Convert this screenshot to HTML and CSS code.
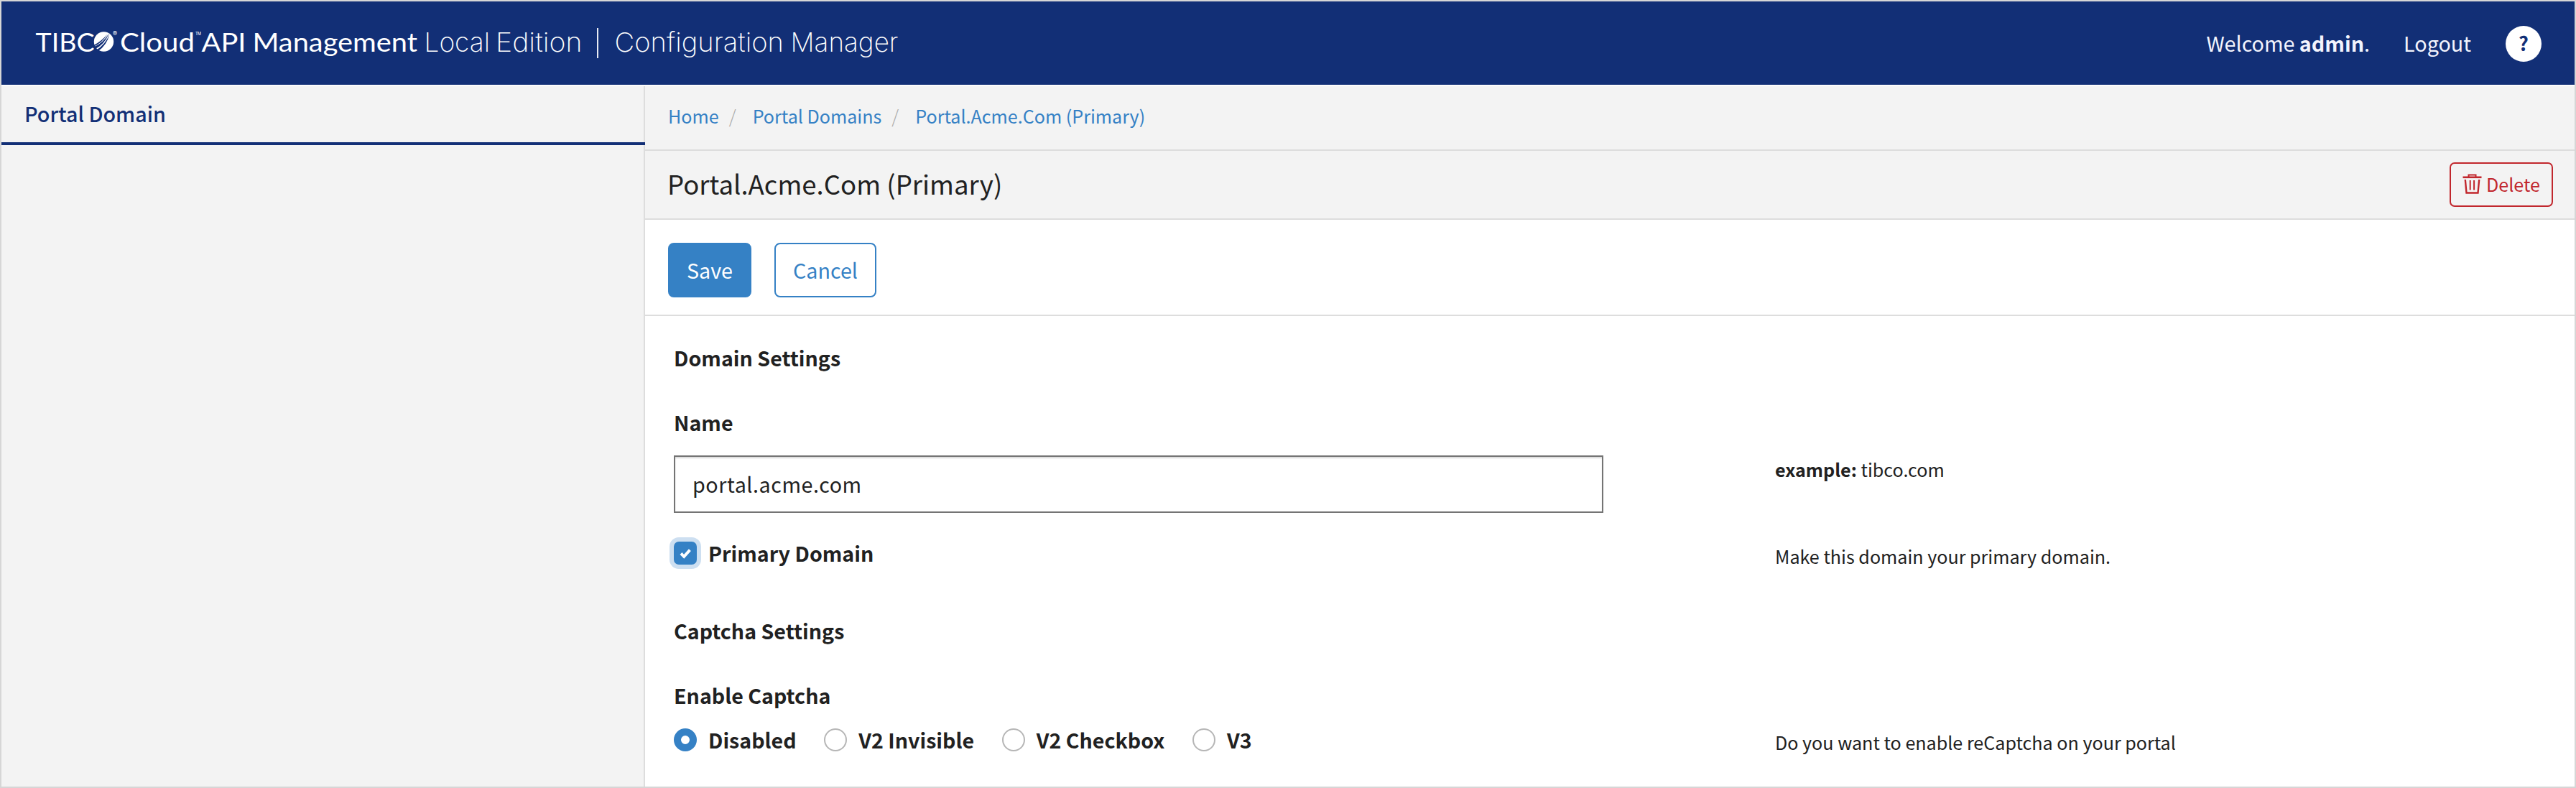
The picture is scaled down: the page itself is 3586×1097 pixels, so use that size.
FILE: index.html
```
<!DOCTYPE html>
<html lang="en">
<head>
<meta charset="utf-8">
<title>Configuration Manager</title>
<link rel="stylesheet" href="styles.css">
</head>
<body>
<div class="app">
  <header class="header">
    <svg class="logo" width="1220" height="60" viewBox="40 30 1220 60" role="img" aria-label="TIBCO Cloud API Management Local Edition">
      <g class="logo-strong">
        <text x="49.5" y="72" textLength="82" lengthAdjust="spacingAndGlyphs">TIBC</text>
        <text x="167" y="72" textLength="104" lengthAdjust="spacingAndGlyphs">Cloud</text>
        <text x="280.5" y="72" textLength="62" lengthAdjust="spacingAndGlyphs">API</text>
        <text x="351.5" y="72" textLength="229.5" lengthAdjust="spacingAndGlyphs">Management</text>
      </g>
      <circle cx="144.5" cy="58" r="13.7" fill="#fff"/>
      <g fill="#122f76">
        <path d="M130.5 65.5Q143.500 60 151.800 46.200Q145.500 62 131.800 68.500Z"/>
        <path d="M133 70.600Q147.500 61.500 152.600 46.800Q149 63.500 135.500 72Z"/>
        <path d="M130 63.200Q142 57 149.500 47.500Q142.500 59.500 130.500 64.700Z"/>
      </g>
      <text class="logo-mark" x="157" y="49.500">®</text>
      <text class="logo-tm" x="272" y="48.500" textLength="8">TM</text>
      <g class="logo-light">
        <text x="590.500" y="72" textLength="91.500" lengthAdjust="spacingAndGlyphs">Local</text>
        <text x="690" y="72" textLength="120.500" lengthAdjust="spacingAndGlyphs">Edition</text>
        <text x="855.500" y="72" textLength="235.500" lengthAdjust="spacingAndGlyphs">Configuration</text>
        <text x="1100.500" y="72" textLength="150" lengthAdjust="spacingAndGlyphs">Manager</text>
      </g>
      <rect x="831" y="39" width="2" height="42" fill="#e7eaf3"/>
    </svg>
    <div class="user">
      <span>Welcome <b>admin</b>.</span>
      <a class="logout">Logout</a>
      <a class="help-button">?</a>
    </div>
  </header>
  <div class="body">
    <aside class="sidebar">
      <div class="tab">Portal Domain</div>
    </aside>
    <main class="main">
      <nav class="breadcrumb">
        <a>Home</a><i class="slash">/</i><a>Portal Domains</a><i class="slash">/</i><a>Portal.Acme.Com (Primary)</a>
      </nav>
      <div class="title-bar">
        <h1 class="title">Portal.Acme.Com (Primary)</h1>
        <button class="button-delete">
          <svg width="27" height="28" viewBox="0 0 27 28" fill="none" stroke="#c1272d">
            <path d="M8.500 4V1.500H18.500V4" stroke-width="2"/>
            <path d="M.5 4.800H26.500" stroke-width="2.600"/>
            <path d="M3.800 8L5.500 26.500H21.500L23.200 8" stroke-width="2.400"/>
            <path d="M10.700 9V22.500M16.100 9V22.500" stroke-width="2"/>
          </svg>
          <span>Delete</span>
        </button>
      </div>
      <div class="actions">
        <button class="button button-primary">Save</button>
        <button class="button">Cancel</button>
      </div>
      <form class="form">
        <h2 class="section">Domain Settings</h2>
        <div class="row row-name">
          <div>
            <label class="label" for="name">Name</label>
            <input class="input" id="name" type="text" value="portal.acme.com">
          </div>
          <p class="hint"><b>example:</b> tibco.com</p>
        </div>
        <div class="row row-primary">
          <label class="choice">
            <span class="checkbox">
              <svg width="32" height="32" viewBox="0 0 32 32" fill="none" stroke="#fff" stroke-width="4"><path d="M10 16.500L14.200 20.800L22.400 11.600"/></svg>
            </span>
            Primary Domain
          </label>
          <p class="hint">Make this domain your primary domain.</p>
        </div>
        <h2 class="section section-captcha">Captcha Settings</h2>
        <div class="row row-captcha">
          <div>
            <div class="label">Enable Captcha</div>
            <div class="choices">
              <label class="choice"><span class="radio radio-on"></span>Disabled</label>
              <label class="choice"><span class="radio"></span>V2 Invisible</label>
              <label class="choice"><span class="radio"></span>V2 Checkbox</label>
              <label class="choice"><span class="radio"></span>V3</label>
            </div>
          </div>
          <p class="hint">Do you want to enable reCaptcha on your portal</p>
        </div>
      </form>
    </main>
  </div>
</div>
</body>
</html>
```
FILE: styles.css
```
* { box-sizing: border-box; }
body { margin: 0; }
.app {
  height: 1097px;
  border: 2px solid #d6d6d6;
  display: flex;
  flex-direction: column;
  overflow: hidden;
  background: #fff;
  color: #212121;
  font: 28.7px/40px "Noto Sans CJK SC", "Noto Sans", sans-serif;
}
.header {
  height: 116px;
  flex: none;
  padding: 0 46px 0 38px;
  display: flex;
  align-items: center;
  justify-content: space-between;
  background: #122f76;
  color: #f3f4fd;
}
.logo { display: block; }
.logo text { fill: #fff; }
.logo .logo-strong text { font: 400 37.5px Lato, sans-serif; }
.logo .logo-light text { font: 200 37px Inter, sans-serif; }
.logo .logo-mark { font: 400 9px Inter, sans-serif; }
.logo .logo-tm { font: 400 5.5px Inter, sans-serif; }
.user { display: flex; align-items: center; gap: 47px; }
.logout { margin-right: 1px; }
.help-button {
  width: 50px;
  height: 50px;
  margin-top: 2px;
  border-radius: 50%;
  background: #fff;
  color: #122f76;
  text-align: center;
  font-size: 27px;
  line-height: 48px;
  font-weight: 700;
}
.body { flex: 1; display: flex; border-top: 2px solid #fcfcfc; }
.sidebar { width: 896px; background: #f3f3f3; border-right: 2px solid #ddd; }
.tab {
  height: 82px;
  margin-right: -2px;
  padding: 18px 0 0 32px;
  border-bottom: 4px solid #122f76;
  color: #122f76;
  font-weight: 500;
}
.main { flex: 1; }
.breadcrumb {
  height: 90px;
  padding: 0 0 6px 32px;
  display: flex;
  align-items: center;
  background: #f3f3f3;
  border-bottom: 2px solid #ddd;
  font-size: 25.1px;
  color: #3581c5;
}
.slash { width: 47px; padding-left: 14px; font-style: oblique 8deg; font-weight: 300; color: #aaa; }
.title-bar {
  height: 96px;
  padding: 0 30px 0 31px;
  display: flex;
  align-items: center;
  justify-content: space-between;
  background: #f3f3f3;
  border-bottom: 2px solid #ddd;
}
.title { margin: 0; padding-bottom: 2px; font-size: 36.6px; font-weight: 400; }
.button-delete {
  width: 144px;
  height: 62px;
  padding: 0 0 0 16px;
  display: flex;
  align-items: center;
  gap: 6px;
  border: 2px solid #c1272d;
  border-radius: 7px;
  background: none;
  color: #c1272d;
  font: 25.15px/40px "Noto Sans CJK SC", sans-serif;
}
.button-delete svg { margin-top: -2px; }
.button-delete span { padding-bottom: 3px; }
.actions {
  height: 134px;
  padding: 32px;
  display: flex;
  gap: 32px;
  border-bottom: 2px solid #ddd;
}
.button {
  height: 76px;
  width: 142px;
  padding: 0 0 1px;
  border: 2px solid #3581c5;
  border-radius: 8px;
  background: #fff;
  color: #3581c5;
  font: 28.7px/40px "Noto Sans CJK SC", sans-serif;
}
.button-primary { width: 116px; background: #3581c5; color: #fff; }
.form { padding: 38px 40px 0; }
.section { margin: 0; font-size: 28.6px; font-weight: 700; line-height: 40px; }
.section-captcha { margin-top: 64px; }
.row { display: grid; grid-template-columns: 1294px 1fr; column-gap: 239px; align-items: start; }
.row-name { margin-top: 50px; }
.row-primary { margin-top: 36px; }
.row-captcha { margin-top: 50px; }
.label { display: block; font-weight: 700; font-size: 28.6px; }
.input {
  display: block;
  width: 100%;
  height: 80px;
  margin-top: 26px;
  padding: 0 24px 1px;
  border: 2px solid #747474;
  background: #fff;
  box-shadow: inset 0 2px 2px rgba(0, 0, 0, .14);
  color: #212121;
  font: 28.7px/40px "Noto Sans CJK SC", sans-serif;
  letter-spacing: .55px;
}
.hint { margin: 0; font-size: 25.1px; }
.row-name .hint, .row-captcha .hint { padding-top: 65px; }
.row-primary .hint { padding-top: 4px; }
.choices { display: flex; gap: 38.6px; margin-top: 22px; }
.choice { display: flex; align-items: center; gap: 16px; font-weight: 700; font-size: 28.6px; }
.checkbox {
  width: 32px;
  height: 32px;
  border-radius: 7px;
  background: #3581c5;
  box-shadow: 0 0 0 6px #cddff1;
}
.checkbox svg { display: block; }
.radio { width: 32px; height: 32px; border: 2px solid #b6b6b6; border-radius: 50%; }
.radio-on { border: 10px solid #3581c5; }
```
